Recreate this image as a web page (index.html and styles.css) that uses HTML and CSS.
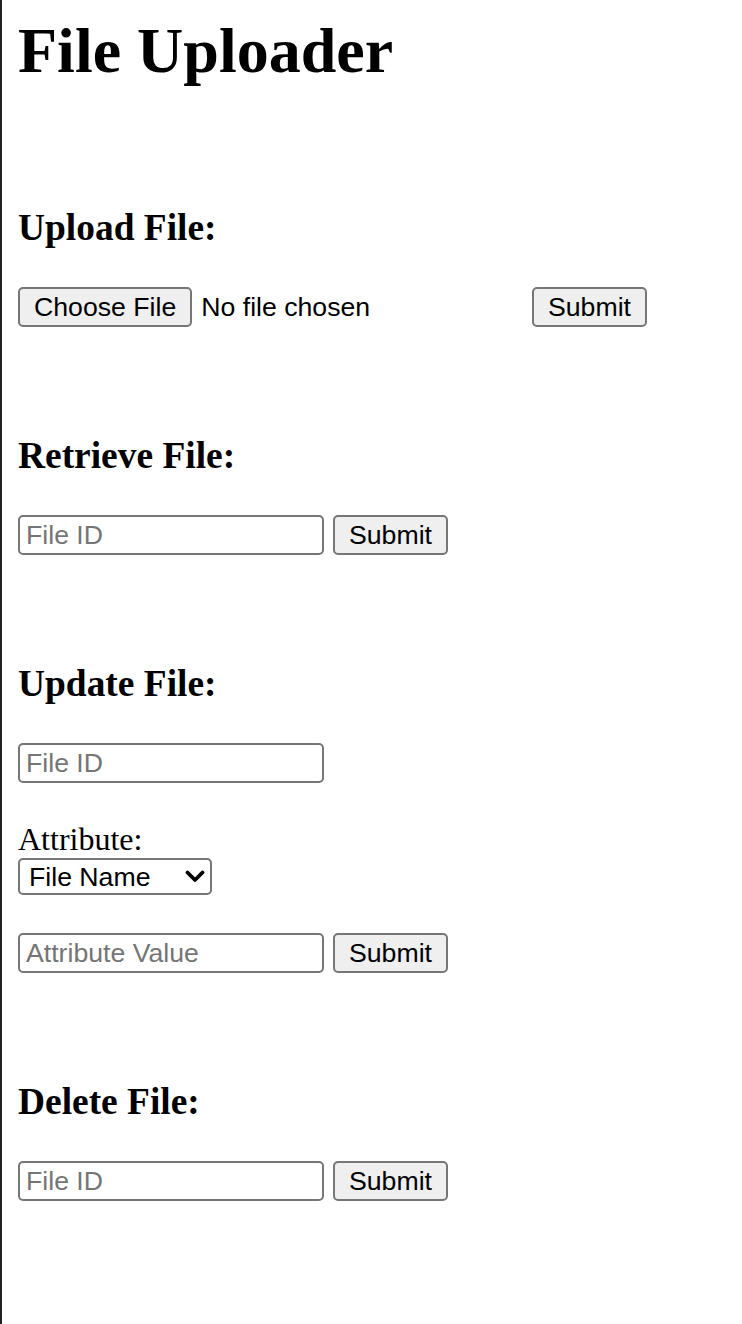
FILE: index.html
```html
<!DOCTYPE html>
<html lang="en">
<head>
<meta charset="utf-8">
<title>File Uploader</title>
<link rel="stylesheet" href="styles.css">
</head>
<body>
  <h1 class="title">File Uploader</h1>
  <div class="sections">
    <section class="section">
      <h3 class="heading">Upload File:</h3>
      <form class="row">
        <div class="file-widget">
          <label class="btn">Choose File<input class="hidden-file" type="file"></label>
          <span class="file-status">No file chosen</span>
        </div>
        <button class="btn" type="button">Submit</button>
      </form>
    </section>
    <section class="section">
      <h3 class="heading">Retrieve File:</h3>
      <form class="row">
        <input class="text-input" type="text" placeholder="File ID">
        <button class="btn" type="button">Submit</button>
      </form>
    </section>
    <section class="section">
      <h3 class="heading">Update File:</h3>
      <form class="stack">
        <input class="text-input" type="text" placeholder="File ID">
        <label class="attr-label">Attribute:</label>
        <span class="select-wrap">
          <select class="select">
            <option>File Name</option>
          </select>
          <svg class="chevron" width="20" height="13" viewBox="0 0 20 13"><path d="M2.5 2.5 L10 10 L17.5 2.5" fill="none" stroke="#000" stroke-width="3.8" stroke-linecap="round" stroke-linejoin="round"/></svg>
        </span>
        <div class="row attr-row">
          <input class="text-input" type="text" placeholder="Attribute Value">
          <button class="btn" type="button">Submit</button>
        </div>
      </form>
    </section>
    <section class="section">
      <h3 class="heading">Delete File:</h3>
      <form class="row">
        <input class="text-input" type="text" placeholder="File ID">
        <button class="btn" type="button">Submit</button>
      </form>
    </section>
  </div>
</body>
</html>
```
FILE: styles.css
```css
html, body {
  background: #fff;
}
body {
  margin: 0;
  min-height: 100vh;
  box-sizing: border-box;
  border-left: 2px solid #222;
  padding: 0 16px;
  font-family: "Liberation Serif", "Times New Roman", serif;
  color: #000;
}
.title {
  margin: 15px 0 0;
  font-size: 64px;
  line-height: 72px;
  font-weight: 700;
}
.sections {
  display: flex;
  flex-direction: column;
  gap: 105px;
  margin-top: 117px;
}
.heading {
  margin: 0 0 38px;
  padding-top: 3px;
  font-size: 37.44px;
  line-height: 42px;
  font-weight: 700;
}
.row {
  display: flex;
  align-items: center;
  gap: 9px;
  margin: 0;
}
.stack {
  display: flex;
  flex-direction: column;
  align-items: flex-start;
  margin: 0;
}
.btn {
  box-sizing: border-box;
  height: 40px;
  display: inline-flex;
  align-items: center;
  justify-content: center;
  padding: 0 14px;
  background: #efefef;
  border: 2px solid #767676;
  border-radius: 5px;
  font-family: "Liberation Sans", Arial, sans-serif;
  font-size: 26.67px;
  color: #000;
  cursor: default;
  white-space: nowrap;
}
.hidden-file {
  display: none;
}
.file-widget {
  display: flex;
  align-items: center;
  gap: 9px;
  width: 505px;
}
.file-status {
  font-family: "Liberation Sans", Arial, sans-serif;
  font-size: 26.67px;
  color: #000;
}
.text-input {
  box-sizing: border-box;
  width: 306px;
  height: 40px;
  margin: 0;
  padding: 0 6px;
  border: 2px solid #767676;
  border-radius: 5px;
  font-family: "Liberation Sans", Arial, sans-serif;
  font-size: 26.67px;
  color: #000;
  background: #fff;
}
.text-input::placeholder {
  color: #757575;
}
.attr-label {
  margin-top: 38px;
  font-size: 32px;
  line-height: 36px;
}
.select-wrap {
  position: relative;
  display: inline-block;
  margin-top: 1px;
}
.select {
  appearance: none;
  -webkit-appearance: none;
  box-sizing: border-box;
  width: 194px;
  height: 37px;
  margin: 0;
  padding: 0 0 0 9px;
  border: 2px solid #767676;
  border-radius: 5px;
  background: #fff;
  font-family: "Liberation Sans", Arial, sans-serif;
  font-size: 26.67px;
  color: #000;
}
.chevron {
  position: absolute;
  right: 7px;
  top: 12px;
  pointer-events: none;
}
.attr-row {
  margin-top: 38px;
}
```
